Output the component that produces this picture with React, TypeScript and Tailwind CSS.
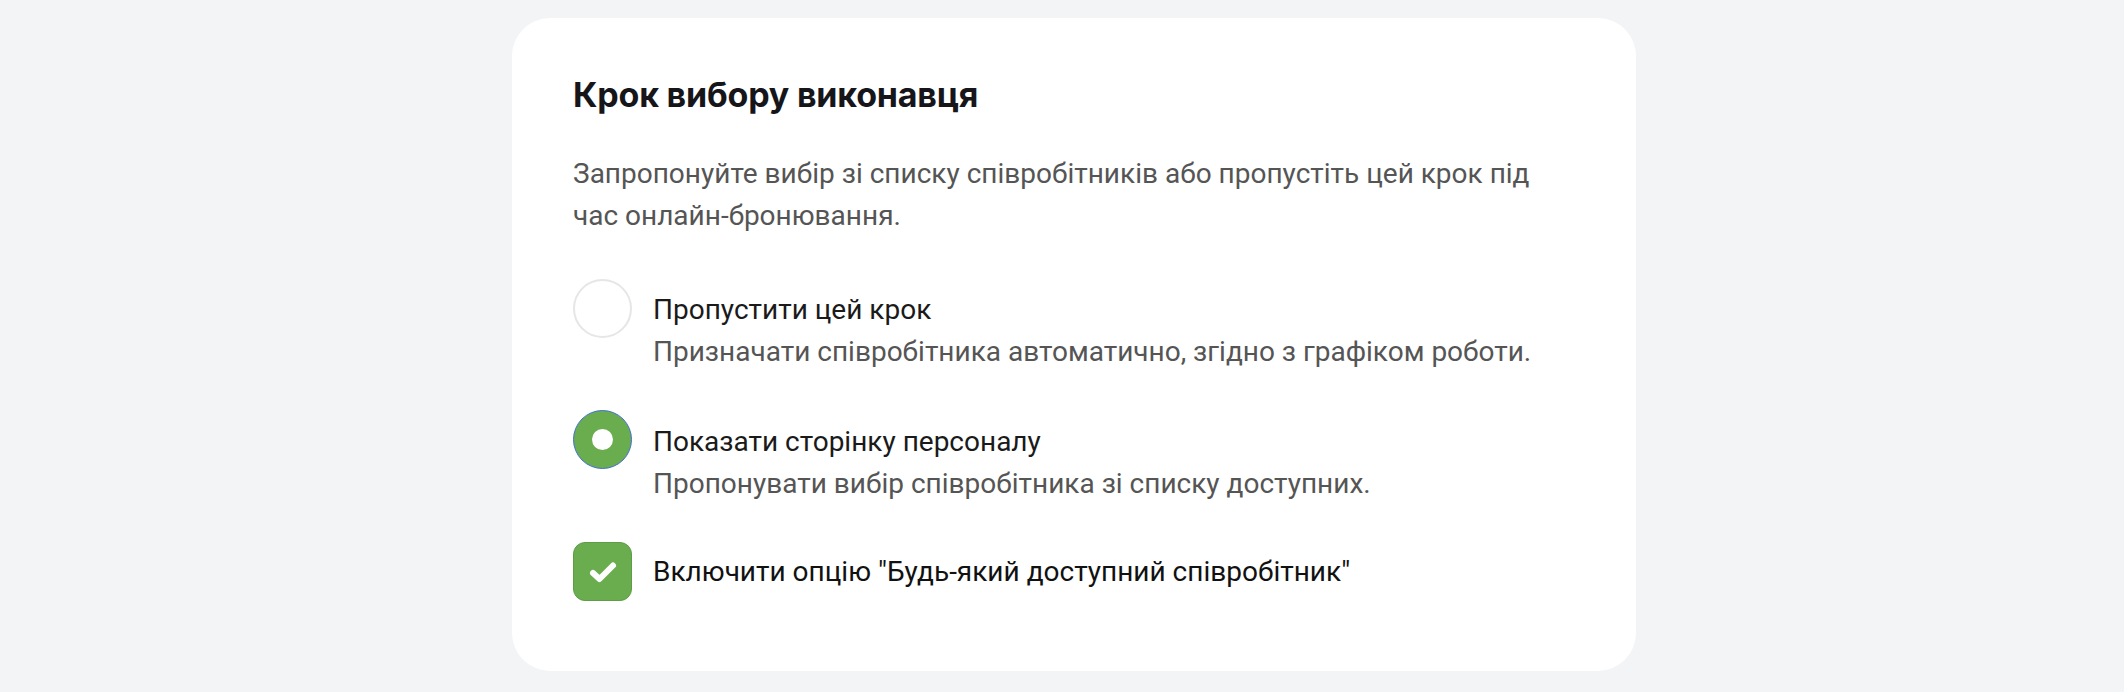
import React, { useState } from 'react';

const Radio: React.FC<{ checked: boolean }> = ({ checked }) =>
  checked ? (
    <div className="flex h-[59px] w-[59px] shrink-0 items-center justify-center rounded-full border border-[#3f6fd1] bg-[#6aad4f]">
      <div className="h-[21px] w-[21px] rounded-full bg-white" />
    </div>
  ) : (
    <div className="h-[59px] w-[59px] shrink-0 rounded-full border-2 border-[#e6e6e6] bg-white" />
  );

const App: React.FC = () => {
  const [mode, setMode] = useState<'skip' | 'staff'>('staff');
  const [anyStaff, setAnyStaff] = useState<boolean>(true);

  return (
    <div className="flex min-h-screen justify-center bg-[#f3f4f6] pl-[24px] pt-[18px] font-['Roboto',sans-serif]">
      <div className="h-[653px] w-[1124px] rounded-[38px] bg-white pl-[61px] pr-[60px] pt-[57px]">
        <h1 className="font-['Inter',sans-serif] text-[34px] font-bold leading-[40px] tracking-[-0.2px] text-[#16161a]">
          Крок вибору виконавця
        </h1>

        <p className="mt-[38px] w-[980px] text-[28px] leading-[42px] text-[#555555]">
          Запропонуйте вибір зі списку співробітників або пропустіть цей крок під час онлайн-бронювання.
        </p>

        <div className="mt-[42px] flex flex-col gap-[37px]">
          <button className="flex items-start gap-[21px] text-left" onClick={() => setMode('skip')}>
            <Radio checked={mode === 'skip'} />
            <div className="pt-[10px]">
              <div className="text-[28px] leading-[42px] text-[#1a1a1a]">Пропустити цей крок</div>
              <div className="text-[28px] leading-[42px] text-[#555555]">
                Призначати співробітника автоматично, згідно з графіком роботи.
              </div>
            </div>
          </button>

          <button className="flex items-start gap-[21px] text-left" onClick={() => setMode('staff')}>
            <Radio checked={mode === 'staff'} />
            <div className="pt-[11px]">
              <div className="text-[28px] leading-[42px] text-[#1a1a1a]">Показати сторінку персоналу</div>
              <div className="text-[28px] leading-[42px] text-[#555555]">
                Пропонувати вибір співробітника зі списку доступних.
              </div>
            </div>
          </button>

          <button className="flex items-center gap-[21px] text-left" onClick={() => setAnyStaff(!anyStaff)}>
            <div
              className={
                anyStaff
                  ? 'flex h-[59px] w-[59px] shrink-0 items-center justify-center rounded-[12px] border border-[#5f9c46] bg-[#6aad4f]'
                  : 'h-[59px] w-[59px] shrink-0 rounded-[12px] border-2 border-[#e6e6e6] bg-white'
              }
            >
              {anyStaff && (
                <svg width="36" height="36" viewBox="0 0 36 36" fill="none">
                  <path d="M8 19l6.5 6L28 11.5" stroke="white" strokeWidth="6" strokeLinecap="round" strokeLinejoin="round" />
                </svg>
              )}
            </div>
            <span className="text-[28px] leading-[42px] text-[#111111]">
              Включити опцію "Будь-який доступний співробітник"
            </span>
          </button>
        </div>
      </div>
    </div>
  );
};

export default App;
